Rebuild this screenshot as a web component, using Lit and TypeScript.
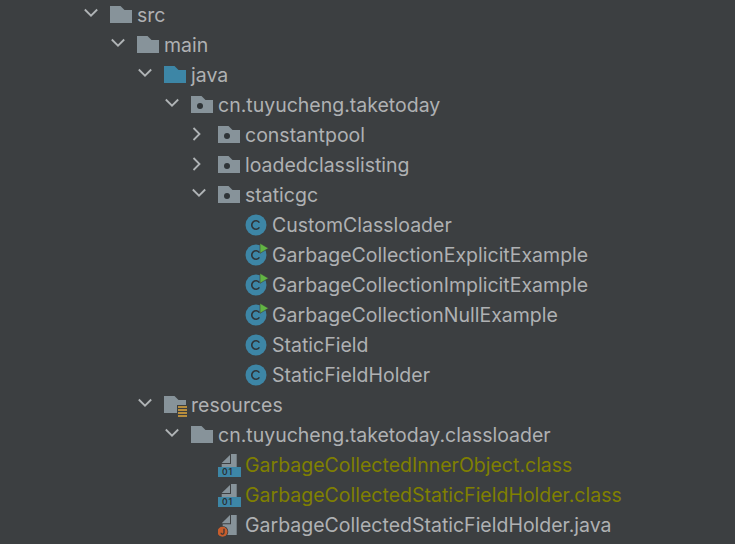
import { LitElement, html, css, svg } from "lit";
import { customElement } from "lit/decorators.js";

type Icon = "folder" | "src" | "pkg" | "respkg" | "res" | "cls" | "run" | "bin" | "java";
interface Row { d: number; t: string; i: Icon; c?: "open" | "closed"; g?: boolean }

const rows: Row[] = [
  { d: 0, t: "src", i: "folder", c: "open" },
  { d: 1, t: "main", i: "folder", c: "open" },
  { d: 2, t: "java", i: "src", c: "open" },
  { d: 3, t: "cn.tuyucheng.taketoday", i: "pkg", c: "open" },
  { d: 4, t: "constantpool", i: "pkg", c: "closed" },
  { d: 4, t: "loadedclasslisting", i: "pkg", c: "closed" },
  { d: 4, t: "staticgc", i: "pkg", c: "open" },
  { d: 5, t: "CustomClassloader", i: "cls" },
  { d: 5, t: "GarbageCollectionExplicitExample", i: "run" },
  { d: 5, t: "GarbageCollectionImplicitExample", i: "run" },
  { d: 5, t: "GarbageCollectionNullExample", i: "run" },
  { d: 5, t: "StaticField", i: "cls" },
  { d: 5, t: "StaticFieldHolder", i: "cls" },
  { d: 2, t: "resources", i: "res", c: "open" },
  { d: 3, t: "cn.tuyucheng.taketoday.classloader", i: "respkg", c: "open" },
  { d: 4, t: "GarbageCollectedInnerObject.class", i: "bin", g: true },
  { d: 4, t: "GarbageCollectedStaticFieldHolder.class", i: "bin", g: true },
  { d: 4, t: "GarbageCollectedStaticFieldHolder.java", i: "java" },
];

const FOLDER = "M0 3h10.5l4 4H22V20H0z";
const grey = "#87939a";
const blue = "#3d86a6";
const bg = "#3c3f41";
const dark = "#2f3437";

function icon(i: Icon) {
  let body;
  switch (i) {
    case "folder":
    case "respkg":
      body = svg`<path d=${FOLDER} fill=${grey}/>`;
      break;
    case "src":
      body = svg`<path d=${FOLDER} fill=${blue}/>`;
      break;
    case "pkg":
      body = svg`<path d=${FOLDER} fill=${grey}/><circle cx="9" cy="13" r="3" fill=${dark}/>`;
      break;
    case "res":
      body = svg`<path d=${FOLDER} fill=${grey}/><rect x="13" y="12" width="11" height="12" fill=${bg}/>
        <path d="M14 14h9M14 17h9M14 20h9M14 23h9" stroke="#e0a83c" stroke-width="1.6"/>`;
      break;
    case "cls":
    case "run":
      body = svg`<circle cx="11" cy="12" r="10.5" fill=${blue}/>
        <path d="M14.4 9.6a4.2 4.2 0 1 0 0 4.8" fill="none" stroke=${dark} stroke-width="1.6"/>
        ${i === "run" ? svg`<path d="M15 0.3l8.5 5-8.5 5z" fill="#62b543" stroke=${bg} stroke-width="0.6"/>` : ""}`;
      break;
    case "bin":
      body = svg`<path d="M13 1h5.7v13H3.7v-3H13z" fill=${grey}/><path d="M12 2v8H3.7z" fill=${grey}/>
        <rect x="0" y="14" width="23" height="10" fill=${blue}/>
        <text x="4" y="22" class="bt">01</text>`;
      break;
    case "java":
      body = svg`<path d="M13 2h5.7v20H4.7V11.3H13z" fill=${grey}/><path d="M12 2v8.3H3.7z" fill=${grey}/>
        <circle cx="4.5" cy="18.7" r="5.8" fill=${bg}/><circle cx="4.5" cy="18.7" r="5" fill="#c75d2c"/>
        <path d="M6 15.7v4a1.5 1.5 0 0 1-3 0" fill="none" stroke=${dark} stroke-width="1.2"/>`;
      break;
  }
  return svg`<svg class="ic" width="24" height="24" viewBox="0 0 24 24">${body}</svg>`;
}

function chevron(c?: "open" | "closed") {
  if (!c) return html`<span class="ch"></span>`;
  const d = c === "open" ? "M4.8 5.5l6.2 6.2 6.2-6.2" : "M5.5 4l6 6-6 6";
  return html`<svg class="ch" width="22" height="22" viewBox="0 0 22 22"><path d=${d} fill="none" stroke="#b0b4b6" stroke-width="1.8"/></svg>`;
}

@customElement("app-root")
export class AppRoot extends LitElement {
  static styles = css`
    :host { display: block; width: 735px; height: 544px; overflow: hidden; background: #3c3f41; }
    .row { display: flex; align-items: center; height: 30px; font: 19.5px Inter, "Noto Sans", sans-serif; color: #afb1b3; white-space: nowrap; }
    .ch { width: 22px; height: 22px; flex: none; margin-right: 8px; }
    .ic { flex: none; margin-right: 3px; }
    .g { color: #808000; }
    .bt { font: 600 8.5px Inter, sans-serif; letter-spacing: 1px; fill: #2b2f31; }
  `;
  render() {
    return rows.map(
      (r) => html`<div class="row" style="padding-left:${80 + 27 * r.d}px">
        ${chevron(r.c)}${icon(r.i)}<span class=${r.g ? "g" : ""}>${r.t}</span>
      </div>`
    );
  }
}
